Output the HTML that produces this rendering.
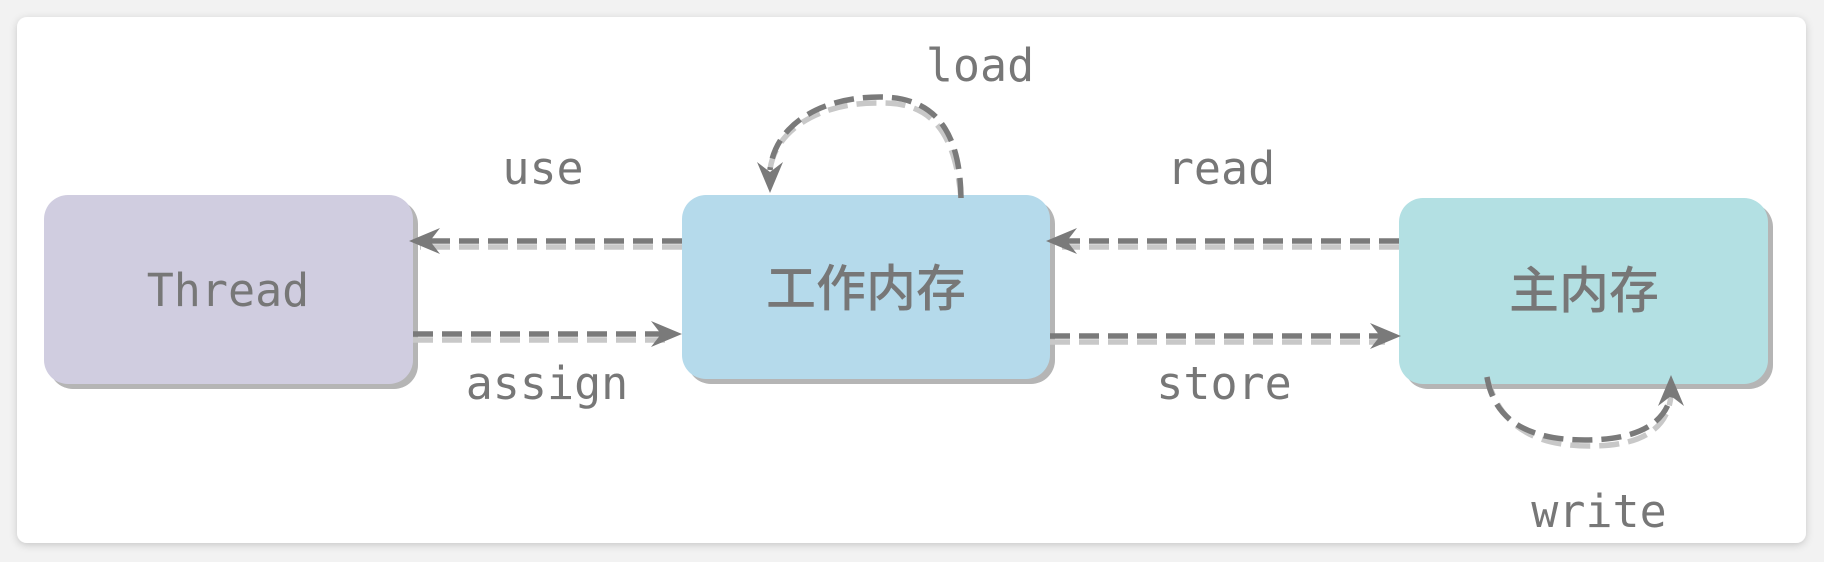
<!DOCTYPE html>
<html><head><meta charset="utf-8"><style>
html,body{margin:0;padding:0;background:#f2f2f2;width:1824px;height:562px;overflow:hidden}
</style></head><body>
<svg width="1824" height="562" xmlns="http://www.w3.org/2000/svg" style="position:absolute;left:0;top:0">
<defs>
<filter id="sh" x="-5%" y="-5%" width="110%" height="110%"><feDropShadow dx="0" dy="2" stdDeviation="4" flood-color="#000" flood-opacity="0.18"/></filter>
</defs>
<rect x="17" y="17" width="1789" height="526" rx="10" fill="#fff" filter="url(#sh)"/>
<rect x="49" y="200" width="369" height="189" rx="24" fill="#b5b5b5"/>
<rect x="44" y="195" width="369" height="189" rx="24" fill="#d0cde0"/>
<rect x="687" y="200" width="368" height="184" rx="24" fill="#b5b5b5"/>
<rect x="682" y="195" width="368" height="184" rx="24" fill="#b5daeb"/>
<rect x="1404" y="203" width="369" height="186" rx="24" fill="#b5b5b5"/>
<rect x="1399" y="198" width="369" height="186" rx="24" fill="#b3e0e3"/>
<g font-family="'DejaVu Sans Mono', monospace" font-size="45" fill="#777" text-anchor="middle">
<text x="228" y="306">Thread</text>
<text x="543" y="184">use</text>
<text x="980" y="81">load</text>
<text x="1221" y="184">read</text>
<text x="547" y="399">assign</text>
<text x="1224" y="399">store</text>
<text x="1599" y="527">write</text>
</g>
<g font-family="'Noto Sans CJK SC','WenQuanYi Zen Hei',sans-serif" font-size="50" font-weight="500" fill="#777" text-anchor="middle">
<text x="866" y="306">工作内存</text>
<text x="1584" y="308">主内存</text>
</g>
<g fill="none" stroke-width="5.5" stroke-dasharray="20 9">
<path d="M682 247 H420 M413 340 H668 M1399 247 H1062 M1050 342 H1385 M961 198 C955 130 930 102 880 103 C820 102 775 130 770 170 M1487 377 C1500 430 1540 446 1590 446 C1640 446 1668 430 1671 395" stroke="#c8c8c8"/>
<path d="M682 241 H420 M413 334 H668 M1399 241 H1062 M1050 336 H1385 M961 198 C960 125 930 97 880 97 C820 97 775 125 770 170 M1487 377 C1495 425 1535 440 1585 440 C1635 440 1665 425 1671 395" stroke="#7a7a7a"/>
</g>
<g fill="#7a7a7a">
<path d="M409 241 L440 228 L430 241 L440 254 Z"/>
<path d="M682 334 L651 321 L661 334 L651 347 Z"/>
<path d="M1046 241 L1077 228 L1067 241 L1077 254 Z"/>
<path d="M1401 336 L1370 323 L1380 336 L1370 349 Z"/>
<path d="M770 193 L757 162 L770 172 L783 162 Z"/>
<path d="M1671 375 L1658 406 L1671 396 L1684 406 Z"/>
</g>
</svg>
</body></html>
